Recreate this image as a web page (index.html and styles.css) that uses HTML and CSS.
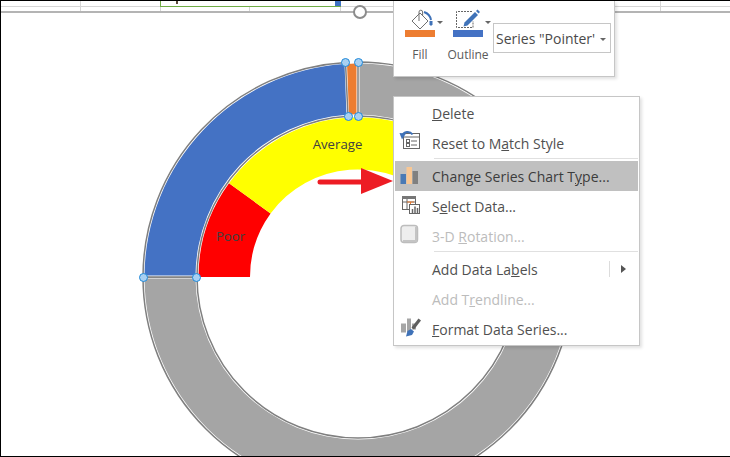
FILE: index.html
```html
<!DOCTYPE html>
<html lang="en">
<head>
<meta charset="utf-8">
<title>Series context menu</title>
<link rel="stylesheet" href="styles.css">
</head>
<body>
<main class="screen">
  <div class="cells">
    <div class="cell-row">
      <span class="cell w-81"></span>
      <span class="cell w-80"></span>
      <span class="cell selected w-180"><i class="frag"></i><i class="fill-handle"></i></span>
      <span class="cell w-320"></span>
      <span class="cell w-rest"></span>
    </div>
    <div class="cell-row short">
      <span class="cell w-81"></span>
      <span class="cell w-80"></span>
      <span class="cell w-89"></span>
      <span class="cell w-91"></span>
      <span class="cell w-320"></span>
      <span class="cell w-rest"></span>
    </div>
  </div>

  <svg class="chart" viewBox="1 13 729 443" width="729" height="443" aria-label="Gauge chart">
    <g class="outline">
      <path d="M358 62A215 215 0 1 1 143 277L197 277A161 161 0 1 0 358 116Z"/>
      <path d="M143 277A215 215 0 0 1 345.5 62.4L348 116.3A161 161 0 0 0 197 277Z"/>
    </g>
    <path class="grey" d="M359.5 63.5A213.5 213.5 0 1 1 144.5 278.5L195.5 278.5A162.5 162.5 0 1 0 359.5 114.5Z"/>
    <path class="blue" d="M144.5 275.5A213.5 213.5 0 0 1 344.5 64L346.5 114.8A162.5 162.5 0 0 0 195.5 275.5Z"/>
    <path class="orange" d="M347 64Q352 63.4 356.5 63.5L356.5 114.2Q353 114.2 349 114.5Z"/>
    <path class="red" d="M198.5 277A159.5 159.5 0 0 1 229 183.2L270.6 213.5A108 108 0 0 0 250 277Z"/>
    <path class="yellow" d="M229 183.2A159.5 159.5 0 0 1 471 164L434 201A108 108 0 0 0 270.6 213.5Z"/>
    <text class="label" x="230.5" y="240.5">Poor</text>
    <text class="label" x="337.5" y="148.5">Average</text>
    <path class="arrow-shaft" d="M320 182L362 182"/>
    <path class="arrow-head" d="M361 168L393 181L361 194Z"/>
  </svg>

  <div class="overlay" aria-hidden="true">
    <i class="rotate"></i>
    <i class="dot d1"></i><i class="dot d2"></i><i class="dot d3"></i>
    <i class="dot d4"></i><i class="dot d5"></i><i class="dot d6"></i>
  </div>

  <section class="mini">
    <div class="tool">
      <div class="tool-top">
        <svg width="30" height="24" viewBox="0 0 30 24">
          <path class="ic-line" d="M15 7L23 15L15 23L7 15Z"/>
          <path class="ic-line-open" d="M14 15V6A1.800 1.800 0 0 1 17.600 6V10"/>
          <path class="ic-drip-line" d="M19 6Q25 8 26 14"/>
          <path class="ic-drip" d="M24.500 15H27.500V18.500L26 20L24.500 18.500Z"/>
        </svg>
        <i class="caret"></i>
      </div>
      <i class="swatch s-orange"></i>
      <span class="tool-label">Fill</span>
    </div>
    <div class="tool">
      <div class="tool-top">
        <svg width="30" height="24" viewBox="0 0 30 24">
          <path class="ic-dash" d="M19 5.500H3.500V21.500H20V15"/>
          <path class="ic-pencil" d="M10.500 20.500L11.500 16.500L22 6L25 9L14.500 19.500Z"/>
          <path class="ic-pencil" d="M23 5L24.500 3.500L27 6L25.500 7.500Z"/>
        </svg>
        <i class="caret"></i>
      </div>
      <i class="swatch s-blue"></i>
      <span class="tool-label">Outline</span>
    </div>
    <div class="series-select">
      <span>Series "Pointer'</span><i class="caret"></i>
    </div>
  </section>

  <nav class="menu">
    <div class="item"><span class="ico"></span><span class="txt"><u>D</u>elete</span></div>
    <div class="item">
      <span class="ico">
        <svg width="24" height="24" viewBox="0 3 24 24">
          <rect class="ic-card" x="6.500" y="5.500" width="16" height="15"/>
          <path class="ic-card" d="M6.500 9H22.500M14 13H20M14 17H20"/>
          <rect class="ic-card" x="9.500" y="11.500" width="3" height="3"/>
          <rect class="ic-card" x="9.500" y="15.500" width="3" height="3"/>
          <path class="ic-undo" d="M5 8A6 6 0 0 1 15.500 6.500"/>
          <path class="ic-undo-head" d="M2.500 5L9 5.500L5 11.500Z"/>
        </svg>
      </span>
      <span class="txt">Reset to M<u>a</u>tch Style</span>
    </div>
    <div class="sep"></div>
    <div class="item active">
      <span class="ico">
        <svg width="24" height="24" viewBox="0 0 24 24">
          <rect fill="#4a7ab5" x="3.500" y="10" width="5.500" height="10"/>
          <rect fill="#f9c793" x="9.500" y="3" width="5.500" height="17"/>
          <rect fill="#808080" x="15.500" y="7" width="5.500" height="13"/>
        </svg>
      </span>
      <span class="txt">Change Series Chart T<u>y</u>pe...</span>
    </div>
    <div class="item">
      <span class="ico">
        <svg width="24" height="24" viewBox="-1 1 24 24">
          <rect class="ic-card" x="4.500" y="3.500" width="13" height="13"/>
          <path fill="#777" d="M4 3H18V6H4Z"/>
          <path class="ic-card" d="M4.500 9H17.500M9 6V16"/>
          <path class="ic-grid-o" d="M9 9H16M12.500 9V15"/>
          <rect class="ic-white" x="11.500" y="11.500" width="10" height="9"/>
          <path class="ic-bars" d="M14.500 20V16M17 20V13.500M19.500 20V15"/>
        </svg>
      </span>
      <span class="txt">S<u>e</u>lect Data...</span>
    </div>
    <div class="item disabled">
      <span class="ico">
        <svg width="24" height="24" viewBox="0 3 24 24">
          <rect class="ic-box" x="4" y="4.500" width="16.500" height="17" rx="3"/>
          <path class="ic-box-edge" d="M19 6V20H6"/>
        </svg>
      </span>
      <span class="txt">3-D <u>R</u>otation...</span>
    </div>
    <div class="sep"></div>
    <div class="item">
      <span class="ico"></span>
      <span class="txt grow">Add Data La<u>b</u>els</span>
      <i class="sub-div"></i><i class="sub-arrow"></i>
    </div>
    <div class="item disabled"><span class="ico"></span><span class="txt">Add T<u>r</u>endline...</span></div>
    <div class="item">
      <span class="ico">
        <svg width="24" height="24" viewBox="-1 3.500 24 24">
          <path fill="#a6a6a6" d="M3 10H8V19H3ZM9 5H13V19H9ZM14 10H18V16H14Z"/>
          <path class="ic-brush" d="M20.500 5L23 7L16 16L13.500 14Z"/>
          <path fill="#3f72b8" d="M8 23L9.500 17.500L13 15.500L16 18L14 21.500Z"/>
        </svg>
      </span>
      <span class="txt"><u>F</u>ormat Data Series...</span>
    </div>
  </nav>
</main>
</body>
</html>
```
FILE: styles.css
```css
* { box-sizing: border-box; }
html, body { margin: 0; padding: 0; background: #fff; }
.screen {
  position: relative;
  width: 730px;
  height: 457px;
  overflow: hidden;
  background: #fff;
  border-top: 1px solid #000;
  border-left: 1px solid #000;
  border-bottom: 1px solid #000;
  font-family: "Open Sans", "Noto Sans", sans-serif;
}
.cells { border-bottom: 2px solid #b4b4b4; height: 12px; }
.cell-row { display: flex; height: 6px; border-bottom: 1px solid #d6d6d6; }
.cell-row.short { height: 4px; border-bottom: 0; }
.cell { display: block; height: 100%; border-right: 1px solid #d6d6d6; position: relative; flex: none; }
.w-81 { width: 80px; }
.w-80 { width: 80px; }
.w-89 { width: 89px; }
.w-91 { width: 91px; }
.w-180 { width: 180px; }
.w-320 { width: 320px; }
.w-rest { flex: 1; border-right: 0; }
.cell.selected { border-right: 0; border-left: 1px solid #70ad47; height: 6px; border-bottom: 1px solid #70ad47; margin-left: -1px; width: 181px; }
.frag { position: absolute; left: 15px; top: 0; width: 2px; height: 3px; background: #5a4a3a; }
.fill-handle { position: absolute; right: 0; top: 0; width: 6px; height: 5px; background: #3f72c4; }

.chart { display: block; }
.outline path { fill: #fff; stroke: #7f7f7f; stroke-width: 1.500; }
.grey { fill: #a5a5a5; }
.blue { fill: #4472c4; }
.orange { fill: #ed7d31; }
.red { fill: #ff0000; }
.yellow { fill: #ffff00; }
.label { font-family: "Open Sans", sans-serif; font-size: 13.200px; fill: #404040; text-anchor: middle; }
.arrow-shaft { stroke: #ed1c24; stroke-width: 5; stroke-linecap: round; fill: none; }
.arrow-head { fill: #ed1c24; }

.overlay { position: absolute; inset: -1px 0 0 -1px; pointer-events: none; }
.rotate { position: absolute; left: 353px; top: 5px; width: 14px; height: 14px; border-radius: 50%; border: 2.500px solid #8c8c8c; background: #fff; }
.dot { position: absolute; width: 9px; height: 9px; border-radius: 50%; background: #a9d0f2; border: 1.500px solid #1f88d8; margin: -4.500px 0 0 -4.500px; }
.d1 { left: 345px; top: 62px; }
.d2 { left: 358px; top: 62px; }
.d3 { left: 348px; top: 116px; }
.d4 { left: 358px; top: 116px; }
.d5 { left: 143px; top: 277px; }
.d6 { left: 196.500px; top: 277px; }

.mini {
  position: absolute;
  left: 392px;
  top: 0;
  width: 222px;
  height: 76px;
  background: #fff;
  border: 1px solid #c6c6c6;
  border-top: 0;
  box-shadow: 2px 2px 3px rgba(0,0,0,.12);
  display: flex;
  padding: 0 0 0 11px;
  gap: 18px;
}
.tool { width: 30px; display: flex; flex-direction: column; align-items: center; position: relative; }
.tool-top { height: 29px; width: 30px; padding-top: 5px; position: relative; }
.tool-top svg { display: block; }
.tool-top .caret { position: absolute; right: -8px; top: 20px; }
.swatch { display: block; width: 30px; height: 7px; flex: none; }
.s-orange { background: #ed7d31; }
.s-blue { background: #4472c4; }
.tool-label { font-size: 12px; color: #5a5a5a; margin-top: 9px; line-height: 17px; white-space: nowrap; }
.caret { display: inline-block; width: 0; height: 0; border: 3.500px solid transparent; border-top: 3.500px solid #666; border-bottom: 0; }
.series-select {
  position: absolute;
  left: 99px;
  top: 22px;
  width: 118px;
  height: 30px;
  border: 1px solid #c6c6c6;
  display: flex;
  align-items: center;
  padding-left: 2px;
  font-size: 14px;
  color: #4a4a4a;
  white-space: nowrap;
  gap: 5px;
}
.series-select .caret { margin-top: 3px; }

.ic-line { fill: #fff; stroke: #707070; stroke-width: 1; }
.ic-line-open { fill: none; stroke: #707070; stroke-width: 1; }
.ic-drip-line { fill: none; stroke: #3f72b8; stroke-width: 2; }
.ic-drip { fill: #3f72b8; }
.ic-dash { fill: none; stroke: #666; stroke-width: 1; stroke-dasharray: 2 1; }
.ic-pencil { fill: #3f72b8; }
.ic-card { fill: none; stroke: #666; stroke-width: 1; }
.ic-undo { fill: none; stroke: #3f72b8; stroke-width: 2; }
.ic-undo-head { fill: #3f72b8; }
.ic-grid-o { fill: none; stroke: #ed7d31; stroke-width: 1; }
.ic-white { fill: #fff; stroke: #666; stroke-width: 1; }
.ic-bars { fill: none; stroke: #666; stroke-width: 1.500; }
.ic-box { fill: #eeeeee; stroke: #bdbdbd; stroke-width: 1.500; }
.ic-box-edge { fill: none; stroke: #c4c4c4; stroke-width: 2; }
.ic-brush { fill: #5f5f5f; }

.menu {
  position: absolute;
  left: 392px;
  top: 95px;
  width: 247px;
  height: 250px;
  background: #fff;
  border: 1px solid #c6c6c6;
  box-shadow: 2px 2px 3px rgba(0,0,0,.12);
  padding: 1px 1px 0 1px;
  display: flex;
  flex-direction: column;
}
.item {
  display: flex;
  align-items: center;
  height: 30px;
  flex: none;
  font-size: 14px;
  color: #505050;
  white-space: nowrap;
}
.item.active { background: #c0c0c0; color: #3c3c3c; }
.item.disabled { color: #bcbcbc; }
.ico { width: 27px; height: 24px; margin-right: 10px; display: flex; justify-content: center; flex: none; }
.txt.grow { flex: 1; }
.sep { height: 3px; margin-left: 39px; flex: none; border-top: 1px solid #e0e0e0; margin-top: 0; }
.sub-div { width: 1px; height: 16px; background: #dcdcdc; margin-right: 11px; }
.sub-arrow { width: 0; height: 0; border: 4px solid transparent; border-left: 5px solid #555; border-right: 0; margin-right: 12px; }
```
